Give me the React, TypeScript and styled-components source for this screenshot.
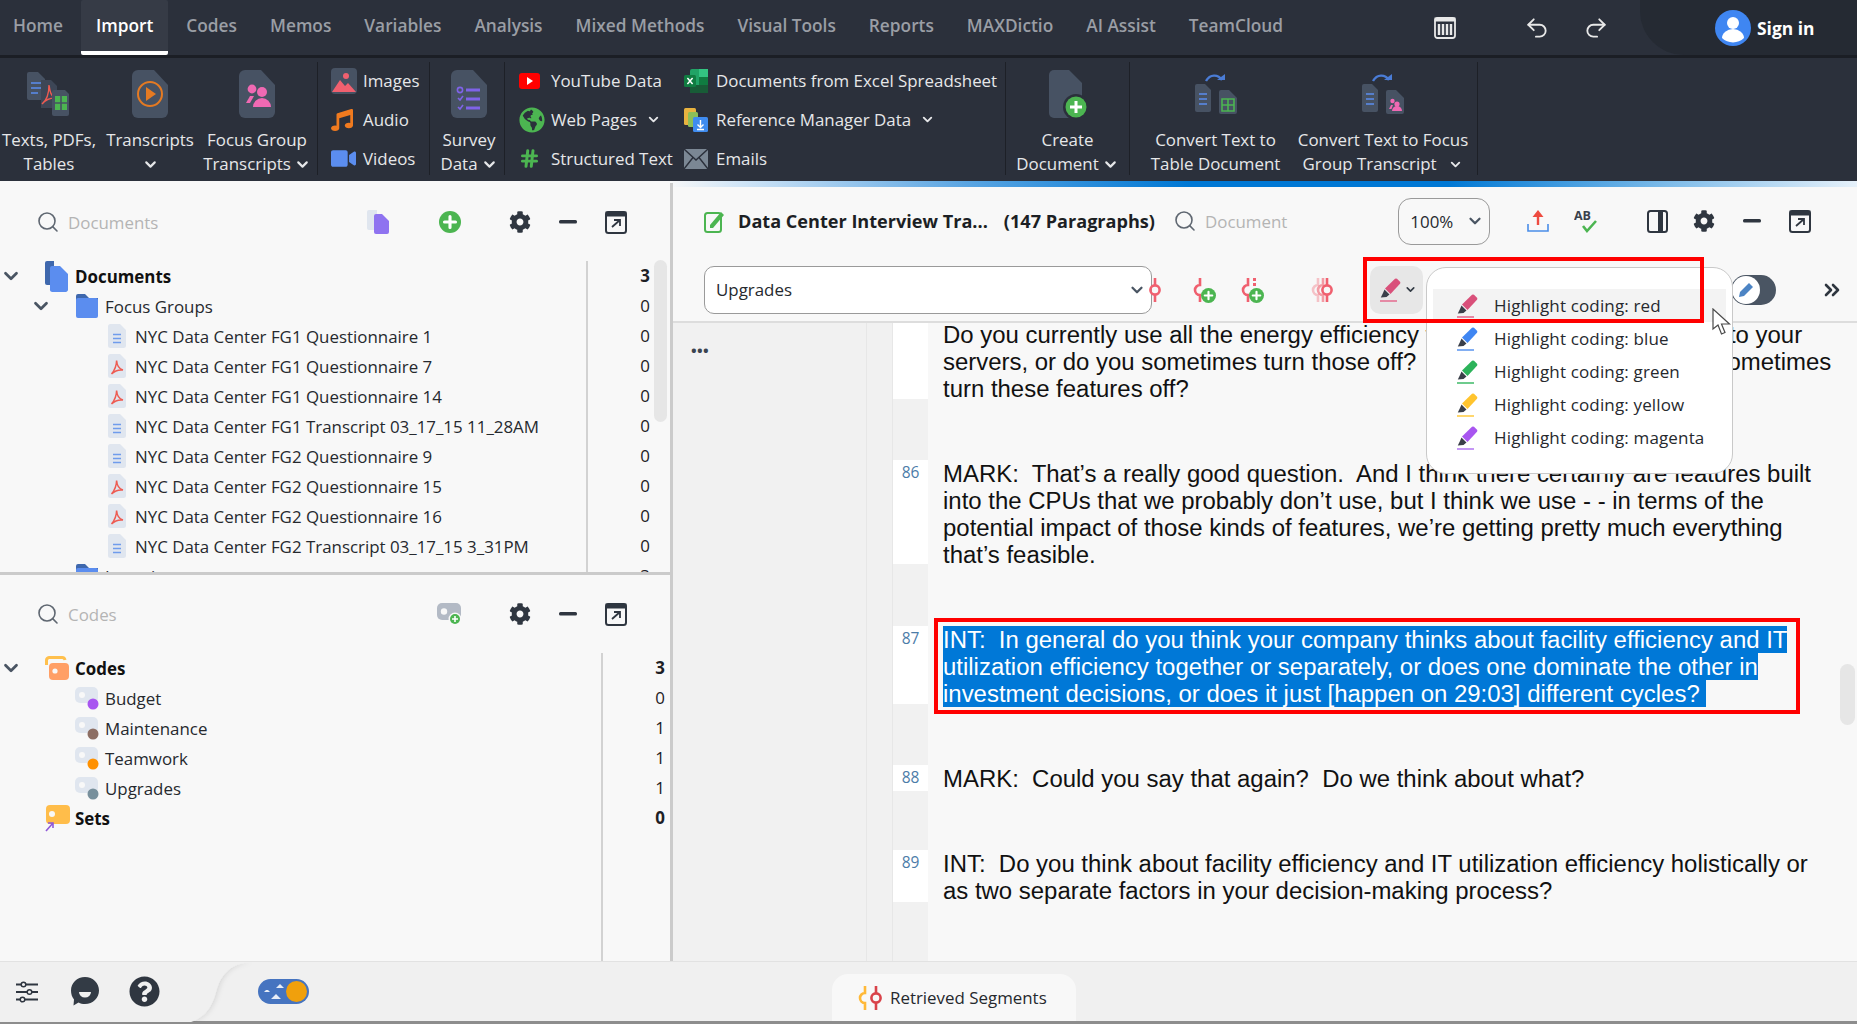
import React from 'react';
import styled, { createGlobalStyle } from 'styled-components';
import { ChevronDown, ChevronsRight, Hash, Redo2, Search, Undo2 } from 'lucide-react';
import { FaCog, FaGlobeAmericas, FaMusic, FaQuestionCircle, FaVideo } from 'react-icons/fa';

const UI = `"Open Sans", "Noto Sans", Roboto, sans-serif`;

const Global = createGlobalStyle`
  html, body { margin: 0; padding: 0; background: #f8f8f8; }
  body { font-family: ${UI}; overflow: hidden; }
  * { box-sizing: border-box; }
`;

const Page = styled.div`
  width: 1857px;
  height: 1024px;
  display: flex;
  flex-direction: column;
  overflow: hidden;
  background: #f8f8f8;
`;

/* top tabs */
const Nav = styled.nav`
  height: 55px;
  flex: none;
  display: flex;
  align-items: stretch;
  background: #2b303b;
`;

const Tab = styled.div<{ $active?: boolean }>`
  display: flex;
  align-items: center;
  padding: 0 15px;
  margin-right: 3px;
  font-size: 17.3px;
  font-weight: 600;
  color: ${(p) => (p.$active ? '#fff' : '#9a9ea5')};
  background: ${(p) => (p.$active ? '#363b46' : 'transparent')};
  border-bottom: ${(p) => (p.$active ? '4px solid #fff' : '4px solid transparent')};
  border-radius: 2px;
  white-space: nowrap;
  &:first-child { padding-left: 13px; }
`;

const NavIcon = styled.span<{ $ml: number }>`
  margin-left: ${(p) => p.$ml}px;
  flex: none;
  display: flex;
  align-items: center;
  color: #e8e8e8;
`;

const SignIn = styled.div`
  margin-left: auto;
  width: 217px;
  display: flex;
  align-items: center;
  gap: 6px;
  padding-left: 75px;
  background: #252a33;
  border-bottom-left-radius: 44px;
  color: #fff;
  font-size: 17.4px;
  font-weight: 700;
`;

const Ribbon = styled.div`
  height: 126px;
  flex: none;
  display: flex;
  background: #2b303b;
  border-top: 3px solid #1b1e25;
`;

const TallButton = styled.div<{ $w: number; $pl?: number }>`
  width: ${(p) => p.$w}px;
  flex: none;
  display: flex;
  flex-direction: column;
  align-items: center;
  padding: 12px 0 0 ${(p) => p.$pl || 0}px;
  color: #e6e7e9;
  font-size: 16.9px;
  line-height: 24px;
  text-align: center;
  white-space: nowrap;
`;

const TallIcon = styled.div`
  height: 48px;
  margin-bottom: 10px;
  display: flex;
  align-items: center;
  justify-content: center;
`;

const Label = styled.div`
  display: flex;
  align-items: center;
  justify-content: center;
  gap: 3px;
  height: 24px;
`;

const Separator = styled.div<{ $ml?: number }>`
  width: 1px;
  flex: none;
  margin: 4px 0 6px ${(p) => p.$ml || 0}px;
  background: #1d2027;
`;

const SmallColumn = styled.div<{ $w: number; $pl: number }>`
  width: ${(p) => p.$w}px;
  flex: none;
  padding: 6px 0 0 ${(p) => p.$pl}px;
  display: flex;
  flex-direction: column;
  gap: 6px;
`;

const SmallItem = styled.div`
  height: 33px;
  display: flex;
  align-items: center;
  color: #e6e7e9;
  font-size: 16.9px;
  white-space: nowrap;
`;

const SmallIcon = styled.span<{ $w?: number }>`
  width: ${(p) => p.$w || 32}px;
  flex: none;
  display: flex;
  align-items: center;
`;

const Rule = styled.div`
  height: 6px;
  flex: none;
  background: linear-gradient(90deg, #f8f8f8 0, #f8f8f8 36%, #cfe4f6 40%, #5aa5e2 52%, #0078d4 64%, #0078d4 78%, #7fbce9 90%, #e6f1fa 100%);
`;

const Workspace = styled.div`
  height: 774px;
  flex: none;
  display: flex;
`;

/* left column */
const LeftColumn = styled.div`
  width: 673px;
  flex: none;
  display: flex;
  flex-direction: column;
  border-right: 3px solid #cbcbcb;
  margin-top: -4px;
  position: relative;
  z-index: 1;
  background: #f8f8f8;
`;

const Panel = styled.section<{ $h: number; $ruled?: boolean }>`
  height: ${(p) => p.$h}px;
  flex: none;
  position: relative;
  overflow: hidden;
  border-bottom: ${(p) => (p.$ruled ? '3px solid #cbcbcb' : 'none')};
`;

const SearchBar = styled.div`
  height: 78px;
  display: flex;
  align-items: center;
  padding: 0 43px 0 36px;
  color: #333b45;
`;

const Fill = styled.span`
  flex: 1;
`;

const Placeholder = styled.span<{ $ml?: number }>`
  margin-left: ${(p) => p.$ml ?? 8}px;
  color: #b4b4b4;
  font-size: 16.9px;
`;

const Tool = styled.span<{ $x: number; $w?: number }>`
  margin-left: ${(p) => p.$x}px;
  width: ${(p) => p.$w || 22}px;
  flex: none;
  display: flex;
  align-items: center;
  justify-content: center;
  color: #2f3640;
`;

const TreeBody = styled.div`
  display: flex;
`;

const Names = styled.div<{ $w: number }>`
  width: ${(p) => p.$w}px;
  flex: none;
  border-right: 2px solid #d2d2d2;
`;

const Counts = styled.div<{ $pr: number }>`
  flex: 1;
  padding-right: ${(p) => p.$pr}px;
  text-align: right;
`;

const TreeRow = styled.div<{ $indent: number; $bold?: boolean }>`
  height: 30px;
  display: flex;
  align-items: center;
  padding-left: ${(p) => p.$indent}px;
  font-size: 16.9px;
  font-weight: ${(p) => (p.$bold ? 700 : 400)};
  color: ${(p) => (p.$bold ? '#111' : '#26292e')};
  white-space: nowrap;
`;

const CountCell = styled.div<{ $bold?: boolean }>`
  height: 30px;
  line-height: 30px;
  font-size: 16.9px;
  font-weight: ${(p) => (p.$bold ? 700 : 400)};
  color: #1d2025;
`;

const Twisty = styled.span<{ $w: number }>`
  width: ${(p) => p.$w}px;
  flex: none;
  display: flex;
  color: #4a5563;
`;

const RowIcon = styled.span<{ $w: number }>`
  width: ${(p) => p.$w}px;
  flex: none;
  display: flex;
  align-items: center;
`;

const ScrollThumb = styled.div<{ $top: number; $h: number; $right: number; $w: number }>`
  position: absolute;
  top: ${(p) => p.$top}px;
  right: ${(p) => p.$right}px;
  width: ${(p) => p.$w}px;
  height: ${(p) => p.$h}px;
  border-radius: 8px;
  background: #e6e6e6;
`;

/* document panel */
const DocPanel = styled.main`
  flex: 1;
  min-width: 0;
  display: flex;
  flex-direction: column;
`;

const DocHeader = styled.div`
  height: 68px;
  flex: none;
  display: flex;
  align-items: center;
  padding-left: 31px;
`;

const DocTitle = styled.span<{ $ml: number }>`
  margin-left: ${(p) => p.$ml}px;
  font-size: 18.1px;
  font-weight: 700;
  color: #1c1f24;
  white-space: nowrap;
`;

const Picker = styled.div<{ $w: number; $h: number; $r: number }>`
  width: ${(p) => p.$w}px;
  height: ${(p) => p.$h}px;
  flex: none;
  display: flex;
  align-items: center;
  justify-content: space-between;
  padding: 0 5px 0 11px;
  background: #fff;
  border: 1.5px solid #9a9a9a;
  border-radius: ${(p) => p.$r}px;
  font-size: 16.9px;
  color: #26292e;
  svg { color: #4a5563; }
`;

const ZoomPicker = styled(Picker)<{ $ml: number }>`
  margin-left: ${(p) => p.$ml}px;
  background: #f8f8f8;
`;

const CodeBar = styled.div`
  height: 68px;
  flex: none;
  position: relative;
  display: flex;
  align-items: center;
  padding: 3px 0 0 31px;
  border-bottom: 2px solid #dddddd;
`;

const CodeTool = styled.span<{ $ml: number }>`
  margin-left: ${(p) => p.$ml}px;
  flex: none;
  display: flex;
  position: relative;
`;

const BadgeRoom = styled.span`
  width: 10px;
`;

const Faded = styled.span<{ $o: number; $mr: number }>`
  display: flex;
  opacity: ${(p) => p.$o};
  margin-right: ${(p) => p.$mr}px;
`;

const Dots = styled.span`
  position: absolute;
  left: 12px;
  top: 0;
  width: 3px;
  height: 8px;
  border-top: 3px solid #f0606f;
  border-bottom: 3px solid #f0606f;
`;

const HighlightButton = styled.div`
  margin-left: 37px;
  width: 53px;
  height: 48px;
  flex: none;
  display: flex;
  align-items: center;
  justify-content: center;
  gap: 3px;
  padding-left: 4px;
  border-radius: 10px;
  background: #e7e7e7;
  color: #333b45;
`;

const ModeToggle = styled.div`
  margin-left: 308px;
  width: 45px;
  height: 30px;
  flex: none;
  border-radius: 15px;
  background: #4a5563;
  display: flex;
  align-items: center;
  padding-left: 1px;
`;

const ModeKnob = styled.span`
  width: 28px;
  height: 28px;
  border-radius: 50%;
  background: #fff;
  display: flex;
  align-items: center;
  justify-content: center;
`;

const Menu = styled.div`
  position: absolute;
  left: 753px;
  top: 12px;
  width: 307px;
  height: 207px;
  padding: 21px 6px;
  background: #fff;
  border: 1px solid #c9c9c9;
  border-radius: 20px;
  z-index: 3;
`;

const MenuItem = styled.div<{ $hover?: boolean }>`
  height: 33px;
  display: flex;
  align-items: center;
  padding-left: 24px;
  gap: 16px;
  font-size: 17px;
  letter-spacing: 0.15px;
  color: #26292e;
  background: ${(p) => (p.$hover ? '#f3f3f3' : 'transparent')};
`;

const RedFrame = styled.div<{ $l: number; $t: number; $w: number; $h: number }>`
  position: absolute;
  left: ${(p) => p.$l}px;
  top: ${(p) => p.$t}px;
  width: ${(p) => p.$w}px;
  height: ${(p) => p.$h}px;
  border: 4px solid #ff0000;
  z-index: 4;
  pointer-events: none;
`;

const Pointer = styled.svg`
  position: absolute;
  left: 1039px;
  top: 53px;
  z-index: 5;
`;

const DocBody = styled.div`
  flex: 1;
  min-height: 0;
  position: relative;
  display: flex;
  overflow: hidden;
`;

const Rail = styled.div`
  width: 194px;
  flex: none;
  padding: 17px 0 0 18px;
  background: #f1f1f1;
  border-right: 1px solid #e7e7e7;
  font-size: 15px;
  font-weight: 700;
  line-height: 20px;
  letter-spacing: 0.3px;
  color: #3b4350;
`;

const Strip = styled.div`
  width: 26px;
  flex: none;
  background: #f1f1f1;
  border-right: 1px solid #e7e7e7;
`;

const ParagraphList = styled.div`
  flex: 1;
  margin-top: -2px;
`;

const ParagraphRow = styled.div`
  display: flex;
  align-items: stretch;
`;

const NumberColumn = styled.div`
  width: 35px;
  flex: none;
  background: #f1f1f1;
`;

const NumberCell = styled.div<{ $lines: number }>`
  height: ${(p) => p.$lines * 26}px;
  padding-top: 2px;
  background: #fff;
  text-align: center;
  font-size: 15.5px;
  line-height: 20px;
  color: #4c7ca8;
`;

const ParagraphText = styled.div`
  position: relative;
  padding: 0 0 58px 15px;
  font-family: "Liberation Sans", Arial, sans-serif;
  font-size: 23.95px;
  line-height: 27px;
  color: #111;
`;

const Line = styled.span<{ $selected?: boolean }>`
  display: block;
  width: fit-content;
  white-space: pre;
  background: ${(p) => (p.$selected ? '#0078d7' : 'transparent')};
  color: ${(p) => (p.$selected ? '#fff' : 'inherit')};
`;

const SelectionFrame = styled.div`
  position: absolute;
  left: 6px;
  top: -8px;
  width: 866px;
  height: 96px;
  border: 4px solid #ff0000;
`;

/* footer */
const Footer = styled.footer`
  height: 63px;
  flex: none;
  position: relative;
  display: flex;
  align-items: flex-end;
  background: #f0f0f0;
  border-top: 1px solid #e2e2e2;
  border-bottom: 3px solid #8d8d8d;
`;

const FooterCurve = styled.svg`
  position: absolute;
  left: 0;
  top: 0;
`;

const FooterTools = styled.div`
  position: relative;
  width: 832px;
  flex: none;
  height: 100%;
  display: flex;
  align-items: center;
  padding-left: 16px;
  color: #2f3640;
`;

const ToolGap = styled.span<{ $w: number }>`
  width: ${(p) => p.$w}px;
  flex: none;
`;

const FooterTab = styled.div`
  width: 244px;
  height: 47px;
  flex: none;
  display: flex;
  align-items: center;
  gap: 8px;
  padding-left: 26px;
  background: #f8f8f8;
  border-radius: 16px 16px 0 0;
  font-size: 16.9px;
  color: #26292e;
`;

const SegmentMark = styled.span`
  display: flex;
`;

/* drawings */
const DOC = 'M6 0 H22 L36 15 V42 A6 6 0 0 1 30 48 H6 A6 6 0 0 1 0 42 V6 A6 6 0 0 1 6 0 Z';

const DocShape = ({ w = 36, h = 48, fill = '#475263', children }: { w?: number; h?: number; fill?: string; children?: React.ReactNode }) => (
  <svg width={w} height={h} viewBox="0 0 36 48">
    <path d={DOC} fill={fill} />
    {children}
  </svg>
);

const Open = () => (
  <svg width="22" height="23" viewBox="0 0 22 23" fill="none" stroke="#2f3640">
    <rect x="1" y="1" width="20" height="21" rx="2.5" strokeWidth="2" />
    <rect x="1" y="1" width="20" height="4" fill="#2f3640" strokeWidth="1" />
    <path d="M7 16 L15 9 M9 9 H15 V15" strokeWidth="1.8" />
  </svg>
);

const Dash = () => (
  <svg width="18" height="4">
    <rect width="18" height="3.4" rx="1.5" fill="#2f3640" />
  </svg>
);

const PlusBadge = ({ size = 24 }: { size?: number }) => (
  <svg width={size} height={size} viewBox="0 0 24 24">
    <circle cx="12" cy="12" r="12" fill="#4cb551" />
    <path d="M12 6 V18 M6 12 H18" stroke="#fff" strokeWidth="3.4" strokeLinecap="round" />
  </svg>
);

const FileIcon = ({ kind }: { kind: 'text' | 'pdf' }) => (
  <svg width="18" height="24" viewBox="0 0 18 24">
    <path d="M2.5 0 H12 L18 6 V21.5 A2.5 2.5 0 0 1 15.5 24 H2.5 A2.5 2.5 0 0 1 0 21.5 V2.5 A2.5 2.5 0 0 1 2.5 0 Z" fill="#e0e6ef" />
    {kind === 'text' ? (
      <path d="M5 10.5 H13 M5 14.5 H13 M5 18.5 H13" stroke="#6f9cec" strokeWidth="1.7" />
    ) : (
      <path d="M3.5 20 C6 17 8.5 12 8.6 6.5 C9 12 11 15 15 16 C11 15.5 7 16.5 3.5 20 Z" fill="none" stroke="#ee5b52" strokeWidth="1.5" />
    )}
  </svg>
);

const Folder = () => (
  <svg width="22" height="24" viewBox="0 0 22 24">
    <path d="M2 0 H9 L13 4 H22 V10 H0 V2 A2 2 0 0 1 2 0 Z" fill="#3f68ad" />
    <rect y="4" width="22" height="20" rx="2" fill="#5b8def" />
  </svg>
);

const DocsStack = () => (
  <svg width="23" height="31" viewBox="0 0 23 31">
    <path d="M2 0 H9 V24 H2 A2 2 0 0 1 0 22 V2 A2 2 0 0 1 2 0 Z" fill="#3f68ad" />
    <path d="M7 5 H15 L23 13 V28 A2.5 2.5 0 0 1 20.5 31 H7 A2.5 2.5 0 0 1 5 28 V7 A2 2 0 0 1 7 5 Z" fill="#5b8def" />
  </svg>
);

const CodeTag = ({ dot }: { dot: string }) => (
  <svg width="24" height="25" viewBox="0 0 24 25">
    <rect y="1" width="23" height="16" rx="5" fill="#e0e6ef" />
    <circle cx="7" cy="9" r="3" fill="#f8f8f8" />
    <circle cx="18" cy="18" r="5.5" fill={dot} />
  </svg>
);

const CodesTag = () => (
  <svg width="24" height="25" viewBox="0 0 24 25">
    <path d="M1.5 9 V4 A3 3 0 0 1 4 1.5 H17 A3 3 0 0 1 20 4" fill="none" stroke="#ffc04d" strokeWidth="3" />
    <rect x="4" y="7" width="20" height="17" rx="4" fill="#ff9f66" />
    <circle cx="10" cy="15" r="2.6" fill="#f8f8f8" />
  </svg>
);

const SetsTag = () => (
  <svg width="25" height="27" viewBox="0 0 25 27">
    <rect x="1" y="0" width="24" height="19" rx="4" fill="#ffbd4a" />
    <circle cx="7" cy="9" r="3" fill="#f8f8f8" />
    <path d="M1 26 L8 18 M3 18 H8 V23" fill="none" stroke="#8f59d8" strokeWidth="1.6" />
  </svg>
);

const Marker = ({ color, under }: { color: string; under: string }) => (
  <svg width="21" height="24" viewBox="0 0 21 24">
    <path d="M15 0.8 Q16 0 17 0.8 L20 3.8 Q20.8 4.8 20 5.8 L10.5 16 L5 10.5 Z" fill={color} />
    <path d="M4.5 11.5 L9.5 16.5 L6.5 19 L0.8 19.5 L3 15 Z" fill="#3a3f49" />
    <rect y="22" width="17" height="2" fill={under} />
  </svg>
);

const Ring = ({ color = '#f0606f' }: { color?: string }) => (
  <svg width="12" height="24" viewBox="0 0 12 24" fill="none" stroke={color} strokeWidth="2.6">
    <line x1="6" y1="0" x2="6" y2="7" />
    <circle cx="6" cy="12" r="4.6" />
    <line x1="6" y1="17" x2="6" y2="24" />
  </svg>
);

const Hook = ({ color = '#f0606f' }: { color?: string }) => (
  <svg width="12" height="24" viewBox="0 0 12 24" fill="none" stroke={color} strokeWidth="2.6">
    <path d="M7 0 V7 A5 5 0 0 0 7 17 V24" />
  </svg>
);

const Badge = styled.span`
  position: absolute;
  left: 8px;
  top: 10px;
  display: flex;
`;

const Drawn = {
  Texts: () => (
    <svg width="44" height="44" viewBox="0 0 44 44">
      <path d="M2 0 H11 L18 7 V28 H2 A2 2 0 0 1 0 26 V2 A2 2 0 0 1 2 0 Z" fill="#475263" />
      <path d="M4 11 H14 M4 16 H14 M4 21 H11" stroke="#5b8def" strokeWidth="1.6" />
      <path d="M14 8 H24 L30 14 V36 H14 Z" fill="#3d4656" />
      <path d="M15 32 C20 28 22 22 22 13 C23 20 24 24 28 26 C24 26 19 27 15 32" fill="none" stroke="#ee5b52" strokeWidth="1.4" />
      <path d="M27 18 H38 L42 22 V42 A2 2 0 0 1 40 44 H27 A2 2 0 0 1 25 42 V20 A2 2 0 0 1 27 18 Z" fill="#475263" />
      <path d="M28 24 H40 V38 H28 Z" fill="#4cb551" />
      <path d="M34 24 V38 M28 31 H40" stroke="#475263" strokeWidth="1.6" />
    </svg>
  ),
  Transcript: () => (
    <DocShape>
      <circle cx="18" cy="24" r="12" fill="none" stroke="#e57a22" strokeWidth="2" />
      <path d="M14 17 L24 24 L14 31 Z" fill="#e57a22" />
    </DocShape>
  ),
  Focus: () => (
    <DocShape>
      <circle cx="13" cy="19" r="4.4" fill="#f069b3" />
      <path d="M7 33 L11 26 H15 L11 33 Z" fill="#f069b3" />
      <circle cx="23" cy="22" r="5" fill="#f069b3" />
      <path d="M14 37 A9 9 0 0 1 32 37 Z" fill="#f069b3" />
    </DocShape>
  ),
  Survey: () => (
    <DocShape>
      <circle cx="9" cy="20" r="2.6" fill="none" stroke="#7f63e8" strokeWidth="1.6" />
      <path d="M7 28 L9 30 L12 26 M7 37 L9 39 L12 35" fill="none" stroke="#7f63e8" strokeWidth="1.6" />
      <path d="M15 20 H29 M15 29 H29 M15 38 H29" stroke="#7f63e8" strokeWidth="3" />
    </DocShape>
  ),
  Create: () => (
    <svg width="38" height="48" viewBox="0 0 38 48">
      <path d="M5 0 H20 L33 13 V48 H5 A5 5 0 0 1 0 43 V5 A5 5 0 0 1 5 0 Z" fill="#475263" />
      <circle cx="27" cy="37" r="13" fill="#2b303b" />
      <circle cx="27" cy="37" r="10.5" fill="#4cb551" />
      <path d="M27 31 V43 M21 37 H33" stroke="#fff" strokeWidth="3" />
    </svg>
  ),
  Convert: ({ target }: { target: 'table' | 'people' }) => (
    <svg width="42" height="40" viewBox="0 0 42 40">
      <path d="M11 7 C15 0 23 0 27 6" fill="none" stroke="#4a7cd6" strokeWidth="2.4" />
      <path d="M22 6 H30 V0 Z" fill="#4a7cd6" />
      <path d="M2 10 H10 L16 16 V36 A2 2 0 0 1 14 38 H2 A2 2 0 0 1 0 36 V12 A2 2 0 0 1 2 10 Z" fill="#475263" />
      <path d="M4 20 H12 M4 25 H12 M4 30 H12" stroke="#5b8def" strokeWidth="1.6" />
      <path d="M26 16 H34 L42 24 V38 A2 2 0 0 1 40 40 H26 A2 2 0 0 1 24 38 V18 A2 2 0 0 1 26 16 Z" fill="#475263" />
      {target === 'table' ? (
        <path d="M27 25 H39 V37 H27 Z M33 25 V37 M27 31 H39" fill="none" stroke="#4cb551" strokeWidth="1.6" />
      ) : (
        <g fill="#f069b3">
          <circle cx="30.5" cy="27" r="2.2" />
          <circle cx="35" cy="30" r="2.6" />
          <path d="M30 37 A5 5 0 0 1 40 37 Z" />
          <path d="M27 35 L29 31 H31 L29.5 35 Z" />
        </g>
      )}
    </svg>
  ),
  Image: () => (
    <svg width="26" height="26" viewBox="0 0 26 26">
      <rect width="26" height="26" rx="4" fill="#475263" />
      <circle cx="15" cy="8" r="3" fill="#f0606f" />
      <path d="M1 24 L9 12 L14 18 L17 15 L25 24 Z" fill="#f0606f" />
    </svg>
  ),
  YouTube: () => (
    <svg width="21" height="16" viewBox="0 0 21 16">
      <rect width="21" height="16" rx="3" fill="#ff0000" />
      <path d="M8 4 L14 8 L8 12 Z" fill="#fff" />
    </svg>
  ),
  Excel: () => (
    <svg width="24" height="24" viewBox="0 0 24 24">
      <rect x="6" y="0" width="18" height="24" rx="2" fill="#21a366" />
      <rect x="15" y="0" width="9" height="8" fill="#33c481" />
      <rect x="6" y="16" width="18" height="8" fill="#185c37" />
      <rect x="15" y="8" width="9" height="8" fill="#107c41" />
      <rect x="0" y="6" width="12" height="12" rx="1.5" fill="#107c41" />
      <path d="M3.4 9 L8.6 15 M8.6 9 L3.4 15" stroke="#fff" strokeWidth="1.5" />
    </svg>
  ),
  Reference: () => (
    <svg width="24" height="24" viewBox="0 0 24 24">
      <rect x="0" y="0" width="12" height="17" rx="1.5" fill="#e8b33f" />
      <rect x="4" y="4" width="10" height="15" rx="1.5" fill="#8cbf58" />
      <rect x="9" y="9" width="15" height="15" rx="1.5" fill="#3f8cf0" />
      <path d="M16.5 12 V19 M13.5 16.5 L16.5 19.5 L19.5 16.5 M13 21.5 H20" fill="none" stroke="#fff" strokeWidth="1.4" />
    </svg>
  ),
  Mail: () => (
    <svg width="24" height="20" viewBox="0 0 24 20">
      <rect width="24" height="20" fill="#7b8794" />
      <path d="M0 0 L12 11 L24 0 M0 20 L9 8.5 M24 20 L15 8.5" fill="none" stroke="#2b303b" strokeWidth="1.4" />
    </svg>
  ),
  Table: () => (
    <svg width="22" height="22" viewBox="0 0 22 22" fill="none" stroke="#e8e8e8">
      <rect x="1" y="1" width="20" height="20" rx="2.5" strokeWidth="1.8" />
      <rect x="1" y="1" width="20" height="3" fill="#e8e8e8" />
      <path d="M5 7 V18 M9 7 V18 M13 7 V18 M17 7 V18" strokeWidth="2.4" />
    </svg>
  ),
  Avatar: () => (
    <svg width="36" height="36" viewBox="0 0 36 36">
      <circle cx="18" cy="18" r="18" fill="#3f86f2" />
      <circle cx="18" cy="13" r="6" fill="#fff" />
      <path d="M7 28 A11 9 0 0 1 29 28 A16 16 0 0 1 7 28 Z" fill="#fff" />
    </svg>
  ),
  Edit: () => (
    <svg width="21" height="23" viewBox="0 0 21 23" fill="none">
      <rect x="1" y="3" width="16" height="19" rx="2.5" stroke="#4cb551" strokeWidth="2" />
      <path d="M6 15 L6 18 L9 18 L20 5 L17 2 Z" fill="#4cb551" />
    </svg>
  ),
  Upload: () => (
    <svg width="22" height="24" viewBox="0 0 22 24" fill="none">
      <path d="M11 16 V4" stroke="#ee4b40" strokeWidth="2.4" />
      <path d="M5.5 8 L11 1 L16.5 8 Z" fill="#ee4b40" />
      <path d="M1 15 V22 H21 V15" stroke="#4a8de8" strokeWidth="1.6" />
    </svg>
  ),
  Spell: () => (
    <svg width="26" height="24" viewBox="0 0 26 24" fill="none">
      <text x="0" y="11" fontSize="12.5" fontWeight="700" fontFamily={UI} fill="#3a414c">AB</text>
      <path d="M9 17 L13 22 L22 12" stroke="#4cb551" strokeWidth="2.6" />
    </svg>
  ),
  Split: () => (
    <svg width="21" height="23" viewBox="0 0 21 23">
      <rect x="1" y="1" width="19" height="21" rx="2.5" fill="none" stroke="#2f3640" strokeWidth="2" />
      <rect x="11" y="1" width="5" height="21" fill="#2f3640" />
    </svg>
  ),
  DocPair: () => (
    <svg width="22" height="24" viewBox="0 0 22 24">
      <path d="M2 0 H10 V20 H2 A2 2 0 0 1 0 18 V2 A2 2 0 0 1 2 0 Z" fill="#e0e6ef" />
      <path d="M9 4 H15 L22 11 V22 A2 2 0 0 1 20 24 H9 A2 2 0 0 1 7 22 V6 A2 2 0 0 1 9 4 Z" fill="#8f73f0" />
    </svg>
  ),
  NewCode: () => (
    <svg width="25" height="24" viewBox="0 0 25 24">
      <rect y="1" width="24" height="17" rx="5" fill="#b3bac5" />
      <circle cx="7" cy="9.5" r="3.2" fill="#f8f8f8" />
      <circle cx="18" cy="17" r="6.5" fill="#f8f8f8" />
      <circle cx="18" cy="17" r="5" fill="#4cb551" />
      <path d="M18 14 V20 M15 17 H21" stroke="#fff" strokeWidth="1.6" />
    </svg>
  ),
  Sliders: () => (
    <svg width="22" height="22" viewBox="0 0 22 22" fill="none" stroke="#2f3640" strokeWidth="2.2">
      <path d="M0 3.5 H5 M10 3.5 H22 M0 11 H11 M16 11 H22 M0 18.5 H4 M9 18.5 H22" />
      <circle cx="7.5" cy="3.5" r="2.3" strokeWidth="1.5" />
      <circle cx="13.5" cy="11" r="2.3" strokeWidth="1.5" />
      <circle cx="6.5" cy="18.5" r="2.3" strokeWidth="1.5" />
    </svg>
  ),
  Chat: () => (
    <svg width="28" height="29" viewBox="0 0 28 29">
      <path d="M14 0 C22 0 28 6 28 13.5 C28 21 22 27 14 27 C11.5 27 9.5 26.5 7.5 25.5 L2.5 28.5 L3 22.5 C1 20 0 17 0 13.5 C0 6 6 0 14 0 Z" fill="#333b45" />
      <path d="M8 15 H20 A6 5.5 0 0 1 8 15 Z" fill="#f0f0f0" />
    </svg>
  ),
  DayToggle: () => (
    <svg width="51" height="25" viewBox="0 0 51 25">
      <rect width="51" height="25" rx="12.5" fill="#4674c0" />
      <circle cx="38.5" cy="12.5" r="10.5" fill="#f0a00c" />
      <path d="M18 9 L22 5 L26 9 Z M6 13 H12 L10 11 H8 Z M13 20 L18 15 L23 20 Z" fill="#e8edf7" />
    </svg>
  ),
  Pen: () => (
    <svg width="18" height="18" viewBox="0 0 18 18">
      <path d="M2 16 L3 11 L12 2 L16 6 L7 15 Z" fill="#4c84c4" />
    </svg>
  ),
  Pointer: () => (
    <Pointer width="19" height="28" viewBox="0 0 19 28">
      <path d="M1 1 L1 21 L6 17 L9.5 26 L13 24.5 L9.5 16 L17.5 16 Z" fill="#fff" stroke="#4a4a4a" strokeWidth="1.2" />
    </Pointer>
  ),
};

const Chev = ({ size = 17 }: { size?: number }) => <ChevronDown size={size} strokeWidth={3} />;

const tabs = ['Home', 'Import', 'Codes', 'Memos', 'Variables', 'Analysis', 'Mixed Methods', 'Visual Tools', 'Reports', 'MAXDictio', 'AI Assist', 'TeamCloud'];

const docs: { name: string; kind: 'text' | 'pdf' }[] = [
  { name: 'NYC Data Center FG1 Questionnaire 1', kind: 'text' },
  { name: 'NYC Data Center FG1 Questionnaire 7', kind: 'pdf' },
  { name: 'NYC Data Center FG1 Questionnaire 14', kind: 'pdf' },
  { name: 'NYC Data Center FG1 Transcript 03_17_15 11_28AM', kind: 'text' },
  { name: 'NYC Data Center FG2 Questionnaire 9', kind: 'text' },
  { name: 'NYC Data Center FG2 Questionnaire 15', kind: 'pdf' },
  { name: 'NYC Data Center FG2 Questionnaire 16', kind: 'pdf' },
  { name: 'NYC Data Center FG2 Transcript 03_17_15 3_31PM', kind: 'text' },
];

const codes = [
  { name: 'Budget', dot: '#a855f0', count: 0 },
  { name: 'Maintenance', dot: '#8d6e63', count: 1 },
  { name: 'Teamwork', dot: '#ff9100', count: 1 },
  { name: 'Upgrades', dot: '#78909c', count: 1 },
];

const markers = [
  { label: 'red', color: '#d9507a', under: '#e58aa5' },
  { label: 'blue', color: '#3f86f2', under: '#82aef2' },
  { label: 'green', color: '#2cb35a', under: '#6ecb8d' },
  { label: 'yellow', color: '#ffc42e', under: '#ffd76e' },
  { label: 'magenta', color: '#a855f0', under: '#c597f5' },
];

const paragraphs = [
  {
    num: '',
    cell: 3,
    lines: [
      'Do you currently use all the energy efficiency features which are available to your',
      'servers, or do you sometimes turn those off?  Do you use them or do we sometimes',
      'turn these features off?',
    ],
  },
  {
    num: '86',
    cell: 4,
    lines: [
      'MARK:  That’s a really good question.  And I think there certainly are features built',
      'into the CPUs that we probably don’t use, but I think we use - - in terms of the',
      'potential impact of those kinds of features, we’re getting pretty much everything',
      'that’s feasible.',
    ],
  },
  {
    num: '87',
    cell: 3,
    selected: true,
    lines: [
      'INT:  In general do you think your company thinks about facility efficiency and IT',
      'utilization efficiency together or separately, or does one dominate the other in',
      'investment decisions, or does it just [happen on 29:03] different cycles? ',
    ],
  },
  { num: '88', cell: 1, lines: ['MARK:  Could you say that again?  Do we think about what?'] },
  {
    num: '89',
    cell: 2,
    lines: [
      'INT:  Do you think about facility efficiency and IT utilization efficiency holistically or',
      'as two separate factors in your decision-making process?',
    ],
  },
];

const SearchGlyph = () => <Search size={24} strokeWidth={1.6} color="#5f6771" />;

export default function App() {
  return (
    <Page>
      <Global />
      <Nav>
        {tabs.map((t) => (
          <Tab key={t} $active={t === 'Import'}>{t}</Tab>
        ))}
        <NavIcon $ml={133}><Drawn.Table /></NavIcon>
        <NavIcon $ml={68}><Undo2 size={26} strokeWidth={1.7} /></NavIcon>
        <NavIcon $ml={33}><Redo2 size={26} strokeWidth={1.7} /></NavIcon>
        <SignIn>
          <Drawn.Avatar />
          Sign in
        </SignIn>
      </Nav>

      <Ribbon>
        <TallButton $w={98}>
          <TallIcon><Drawn.Texts /></TallIcon>
          <Label>Texts, PDFs,</Label>
          <Label>Tables</Label>
        </TallButton>
        <TallButton $w={104}>
          <TallIcon><Drawn.Transcript /></TallIcon>
          <Label>Transcripts</Label>
          <Label><Chev /></Label>
        </TallButton>
        <TallButton $w={110}>
          <TallIcon><Drawn.Focus /></TallIcon>
          <Label>Focus Group</Label>
          <Label>Transcripts<Chev /></Label>
        </TallButton>
        <Separator $ml={5} />
        <SmallColumn $w={111} $pl={13}>
          <SmallItem><SmallIcon $w={32}><Drawn.Image /></SmallIcon>Images</SmallItem>
          <SmallItem><SmallIcon $w={32}><FaMusic size={22} color="#f07a1f" /></SmallIcon>Audio</SmallItem>
          <SmallItem><SmallIcon $w={32}><FaVideo size={25} color="#5b8def" /></SmallIcon>Videos</SmallItem>
        </SmallColumn>
        <Separator />
        <TallButton $w={74} $pl={4}>
          <TallIcon><Drawn.Survey /></TallIcon>
          <Label>Survey</Label>
          <Label>Data<Chev /></Label>
        </TallButton>
        <Separator />
        <SmallColumn $w={170} $pl={14}>
          <SmallItem><SmallIcon $w={32}><Drawn.YouTube /></SmallIcon>YouTube Data</SmallItem>
          <SmallItem><SmallIcon $w={32}><FaGlobeAmericas size={26} color="#4cb551" /></SmallIcon>Web Pages&nbsp;&nbsp;<Chev size={15} /></SmallItem>
          <SmallItem><SmallIcon $w={32}><Hash size={21} strokeWidth={3.4} color="#4cb551" /></SmallIcon>Structured Text</SmallItem>
        </SmallColumn>
        <SmallColumn $w={330} $pl={9}>
          <SmallItem><SmallIcon><Drawn.Excel /></SmallIcon>Documents from Excel Spreadsheet</SmallItem>
          <SmallItem><SmallIcon><Drawn.Reference /></SmallIcon>Reference Manager Data&nbsp;&nbsp;<Chev size={15} /></SmallItem>
          <SmallItem><SmallIcon><Drawn.Mail /></SmallIcon>Emails</SmallItem>
        </SmallColumn>
        <Separator />
        <TallButton $w={123}>
          <TallIcon><Drawn.Create /></TallIcon>
          <Label>Create</Label>
          <Label>Document<Chev /></Label>
        </TallButton>
        <Separator />
        <TallButton $w={171}>
          <TallIcon><Drawn.Convert target="table" /></TallIcon>
          <Label>Convert Text to</Label>
          <Label>Table Document</Label>
        </TallButton>
        <TallButton $w={164}>
          <TallIcon><Drawn.Convert target="people" /></TallIcon>
          <Label>Convert Text to Focus</Label>
          <Label>Group Transcript&nbsp;&nbsp;<Chev size={15} /></Label>
        </TallButton>
        <Separator $ml={12} />
      </Ribbon>
      <Rule />

      <Workspace>
        <LeftColumn>
          <Panel $h={392} $ruled>
            <SearchBar>
              <SearchGlyph />
              <Placeholder>Documents</Placeholder>
              <Fill />
              <Tool $x={0}><Drawn.DocPair /></Tool>
              <Tool $x={50}><PlusBadge /></Tool>
              <Tool $x={48}><FaCog size={22} /></Tool>
              <Tool $x={26}><Dash /></Tool>
              <Tool $x={26}><Open /></Tool>
            </SearchBar>
            <TreeBody>
              <Names $w={588}>
                <TreeRow $indent={0} $bold>
                  <Twisty $w={45}><Chev size={22} /></Twisty>
                  <RowIcon $w={30}><DocsStack /></RowIcon>
                  Documents
                </TreeRow>
                <TreeRow $indent={30}>
                  <Twisty $w={46}><Chev size={22} /></Twisty>
                  <RowIcon $w={29}><Folder /></RowIcon>
                  Focus Groups
                </TreeRow>
                {docs.map((d) => (
                  <TreeRow key={d.name} $indent={108}>
                    <RowIcon $w={27}><FileIcon kind={d.kind} /></RowIcon>
                    {d.name}
                  </TreeRow>
                ))}
                <TreeRow $indent={76}>
                  <RowIcon $w={29}><Folder /></RowIcon>
                  Interviews
                </TreeRow>
              </Names>
              <Counts $pr={20}>
                <CountCell $bold>3</CountCell>
                {[0, 0, 0, 0, 0, 0, 0, 0, 0].map((n, i) => (
                  <CountCell key={i}>{n}</CountCell>
                ))}
                <CountCell>3</CountCell>
              </Counts>
            </TreeBody>
            <ScrollThumb $top={77} $h={162} $right={3} $w={13} />
          </Panel>
          <Panel $h={386}>
            <SearchBar>
              <SearchGlyph />
              <Placeholder>Codes</Placeholder>
              <Fill />
              <Tool $x={0} $w={25}><Drawn.NewCode /></Tool>
              <Tool $x={47}><FaCog size={22} /></Tool>
              <Tool $x={26}><Dash /></Tool>
              <Tool $x={26}><Open /></Tool>
            </SearchBar>
            <TreeBody>
              <Names $w={603} style={{ height: 308 }}>
                <TreeRow $indent={0} $bold>
                  <Twisty $w={45}><Chev size={22} /></Twisty>
                  <RowIcon $w={30}><CodesTag /></RowIcon>
                  Codes
                </TreeRow>
                {codes.map((c) => (
                  <TreeRow key={c.name} $indent={75}>
                    <RowIcon $w={30}><CodeTag dot={c.dot} /></RowIcon>
                    {c.name}
                  </TreeRow>
                ))}
                <TreeRow $indent={45} $bold>
                  <RowIcon $w={30}><SetsTag /></RowIcon>
                  Sets
                </TreeRow>
              </Names>
              <Counts $pr={5}>
                <CountCell $bold>3</CountCell>
                {codes.map((c) => (
                  <CountCell key={c.name}>{c.count}</CountCell>
                ))}
                <CountCell $bold>0</CountCell>
              </Counts>
            </TreeBody>
          </Panel>
        </LeftColumn>

        <DocPanel>
          <DocHeader>
            <Drawn.Edit />
            <DocTitle $ml={13}>Data Center Interview Tra...</DocTitle>
            <DocTitle $ml={16}>(147 Paragraphs)</DocTitle>
            <Tool $x={18} $w={24}><SearchGlyph /></Tool>
            <Placeholder>Document</Placeholder>
            <ZoomPicker $ml={111} $w={92} $h={47} $r={13}>100%<Chev size={18} /></ZoomPicker>
            <Tool $x={37}><Drawn.Upload /></Tool>
            <Tool $x={25} $w={26}><Drawn.Spell /></Tool>
            <Tool $x={46}><Drawn.Split /></Tool>
            <Tool $x={25}><FaCog size={22} /></Tool>
            <Tool $x={26}><Dash /></Tool>
            <Tool $x={26}><Open /></Tool>
          </DocHeader>
          <CodeBar>
            <Picker $w={448} $h={48} $r={10}>Upgrades<Chev size={18} /></Picker>
            <CodeTool $ml={-3}><Ring /></CodeTool>
            <CodeTool $ml={32}>
              <Hook />
              <Badge><PlusBadge size={15} /></Badge>
              <BadgeRoom />
            </CodeTool>
            <CodeTool $ml={26}>
              <Hook />
              <Dots />
              <Badge><PlusBadge size={15} /></Badge>
              <BadgeRoom />
            </CodeTool>
            <CodeTool $ml={48}>
              <Faded $o={0.35} $mr={-7}><Hook /></Faded>
              <Faded $o={0.6} $mr={-7}><Hook /></Faded>
              <Ring />
            </CodeTool>
            <HighlightButton>
              <Marker color="#d9507a" under="#e58aa5" />
              <Chev size={13} />
            </HighlightButton>
            <ModeToggle>
              <ModeKnob><Drawn.Pen /></ModeKnob>
            </ModeToggle>
            <CodeTool $ml={44}><ChevronsRight size={24} strokeWidth={2.6} color="#2f3640" /></CodeTool>

            <Menu>
              {markers.map((m, i) => (
                <MenuItem key={m.label} $hover={i === 0}>
                  <Marker color={m.color} under={m.under} />
                  Highlight coding: {m.label}
                </MenuItem>
              ))}
            </Menu>
            <RedFrame $l={690} $t={2} $w={341} $h={66} />
            <Drawn.Pointer />
          </CodeBar>
          <DocBody>
            <Rail>•••</Rail>
            <Strip />
            <ParagraphList>
              {paragraphs.map((p) => (
                <ParagraphRow key={p.lines[0]}>
                  <NumberColumn>
                    <NumberCell $lines={p.cell}>{p.num}</NumberCell>
                  </NumberColumn>
                  <ParagraphText>
                    {p.selected && <SelectionFrame />}
                    {p.lines.map((l) => (
                      <Line key={l} $selected={p.selected}>{l}</Line>
                    ))}
                  </ParagraphText>
                </ParagraphRow>
              ))}
            </ParagraphList>
            <ScrollThumb $top={341} $h={61} $right={2} $w={15} />
          </DocBody>
        </DocPanel>
      </Workspace>

      <Footer>
        <FooterCurve width="260" height="60" viewBox="0 0 260 60">
          <defs>
            <filter id="curve-shadow" x="-5%" y="-5%" width="115%" height="110%">
              <feDropShadow dx="2" dy="0" stdDeviation="2.5" floodColor="#000" floodOpacity="0.1" />
            </filter>
          </defs>
          <path d="M0 0 H250 C228 2 220 15 216 30 C212 45 205 56 188 61 H0 Z" fill="#f0f0f0" filter="url(#curve-shadow)" />
        </FooterCurve>
        <FooterTools>
          <Drawn.Sliders />
          <ToolGap $w={33} />
          <Drawn.Chat />
          <ToolGap $w={30} />
          <FaQuestionCircle size={31} />
          <ToolGap $w={98} />
          <Drawn.DayToggle />
        </FooterTools>
        <FooterTab>
          <SegmentMark>
            <Hook color="#ffb938" />
            <Ring color="#d9434a" />
          </SegmentMark>
          Retrieved Segments
        </FooterTab>
      </Footer>
    </Page>
  );
}
